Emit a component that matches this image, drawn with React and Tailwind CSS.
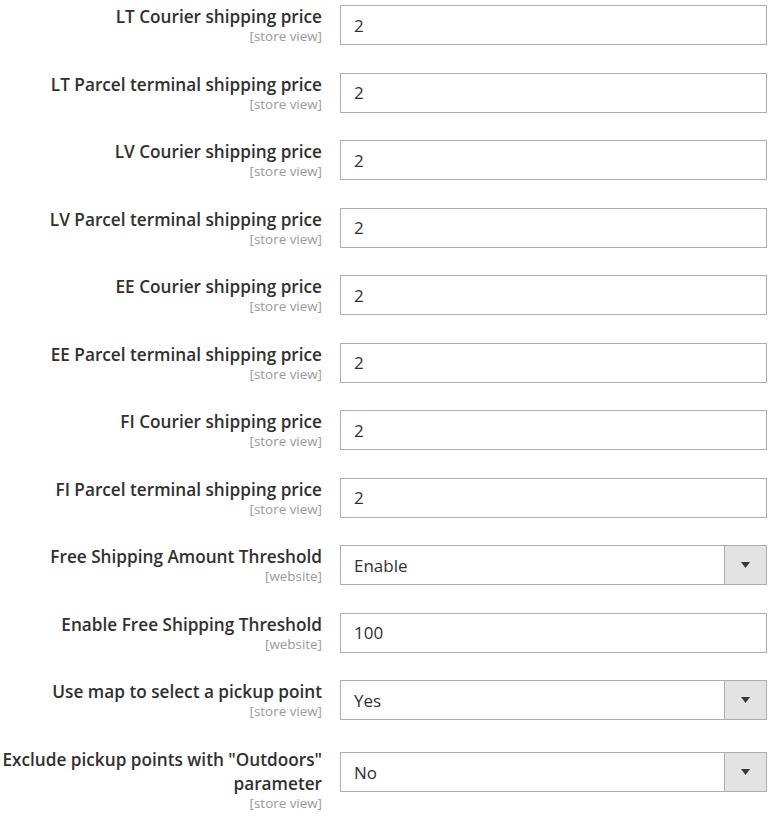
const rows = [
  { label: "LT Courier shipping price", scope: "store view", value: "2" },
  { label: "LT Parcel terminal shipping price", scope: "store view", value: "2" },
  { label: "LV Courier shipping price", scope: "store view", value: "2" },
  { label: "LV Parcel terminal shipping price", scope: "store view", value: "2" },
  { label: "EE Courier shipping price", scope: "store view", value: "2" },
  { label: "EE Parcel terminal shipping price", scope: "store view", value: "2" },
  { label: "FI Courier shipping price", scope: "store view", value: "2" },
  { label: "FI Parcel terminal shipping price", scope: "store view", value: "2" },
  { label: "Free Shipping Amount Threshold", scope: "website", value: "Enable", select: true },
  { label: "Enable Free Shipping Threshold", scope: "website", value: "100" },
  { label: "Use map to select a pickup point", scope: "store view", value: "Yes", select: true },
];

function Field({ value, select }) {
  return (
    <div className="flex h-10 flex-1 items-stretch border border-[#adadad] bg-white">
      <div className="flex flex-1 items-center pl-[13px] pt-px text-[17px] text-[#303030]">
        {value}
      </div>
      {select && (
        <div className="flex w-[42px] items-center justify-center border-l border-[#adadad] bg-[#e3e3e3]">
          <svg width="9" height="6" viewBox="0 0 9 6">
            <path d="M0 0h9L4.5 6z" fill="#41362f" />
          </svg>
        </div>
      )}
    </div>
  );
}

function Row({ label, scope, value, select }) {
  return (
    <div className="flex items-start gap-[18px]">
      <div className="w-[322px] shrink-0 text-right">
        <div className="text-[17.2px] font-semibold leading-6 text-[#303030]">
          {label}
        </div>
        <div className="text-[13.4px] leading-[14px] text-[#999]">[{scope}]</div>
      </div>
      <Field value={value} select={select} />
    </div>
  );
}

export default function App() {
  return (
    <div
      className="min-h-[817px] w-[775px] bg-white pr-2 pt-[5px]"
      style={{ fontFamily: '"Open Sans", "Noto Sans", sans-serif' }}
    >
      <div className="flex flex-col gap-[27.5px]">
        {rows.map((r) => (
          <Row key={r.label} {...r} />
        ))}
      </div>
      <div className="mt-[32px] flex items-start gap-[18px]">
        <div className="-mt-[4px] w-[322px] shrink-0 text-right">
          <div className="text-[17.2px] font-semibold leading-6 text-[#303030]">
            Exclude pickup points with "Outdoors"
            <br />
            parameter
          </div>
          <div className="text-[13.4px] leading-[14px] text-[#999]">[store view]</div>
        </div>
        <Field value="No" select />
      </div>
    </div>
  );
}
